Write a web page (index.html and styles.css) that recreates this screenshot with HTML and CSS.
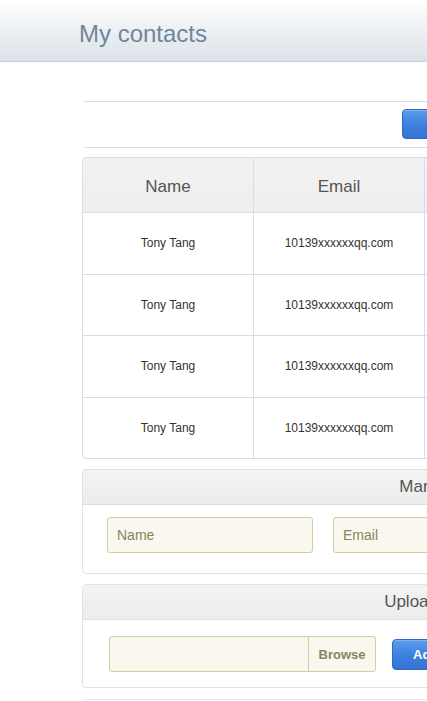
FILE: index.html
```html
<!DOCTYPE html>
<html lang="en">
<head>
<meta charset="utf-8">
<title>My contacts</title>
<link rel="stylesheet" href="styles.css">
</head>
<body>
<header class="topbar">
  <h1 class="title">My contacts</h1>
</header>
<main class="page">
  <div class="toolbar">
    <button class="btn btn-primary btn-new" type="button">Add new contact</button>
  </div>

  <table class="contacts">
    <thead>
      <tr>
        <th class="col-name">Name</th>
        <th class="col-email">Email</th>
        <th class="col-phone">Phone</th>
        <th class="col-actions">Actions</th>
      </tr>
    </thead>
    <tbody>
      <tr><td>Tony Tang</td><td>10139xxxxxxqq.com</td><td>138xxxxxxxx</td><td>Edit</td></tr>
      <tr><td>Tony Tang</td><td>10139xxxxxxqq.com</td><td>138xxxxxxxx</td><td>Edit</td></tr>
      <tr><td>Tony Tang</td><td>10139xxxxxxqq.com</td><td>138xxxxxxxx</td><td>Edit</td></tr>
      <tr><td>Tony Tang</td><td>10139xxxxxxqq.com</td><td>138xxxxxxxx</td><td>Edit</td></tr>
    </tbody>
  </table>

  <section class="panel">
    <div class="panel-head">Manage contacts</div>
    <div class="panel-body form-row">
      <input class="field" type="text" placeholder="Name">
      <input class="field" type="text" placeholder="Email">
      <input class="field" type="text" placeholder="Phone">
    </div>
  </section>

  <section class="panel">
    <div class="panel-head">Upload your contacts</div>
    <div class="panel-body upload-row">
      <label class="file">
        <span class="file-name"></span>
        <span class="file-browse">Browse</span>
      </label>
      <button class="btn btn-primary btn-add" type="button">Add</button>
    </div>
  </section>

  <hr class="rule">
</main>
</body>
</html>
```

FILE: styles.css
```css
html, body {
  margin: 0;
  padding: 0;
}

body {
  overflow: hidden;
  background: #ffffff;
  font-family: "Liberation Sans", Arial, sans-serif;
  color: #333333;
}

.topbar {
  height: 61px;
  padding-left: 79px;
  background: linear-gradient(to bottom, #ffffff 0%, #eff2f5 45%, #dbe2e8 100%);
  border-bottom: 1px solid #c6d0d8;
}

.title {
  margin: 0;
  padding-top: 20px;
  font-size: 24px;
  line-height: 27px;
  font-weight: normal;
  color: #6f869a;
}

.page {
  width: 764px;
  margin: 39px 0 0 82px;
}

.toolbar {
  margin-left: 2px;
  display: flex;
  padding: 7px 0 8px 318px;
  border-top: 1px solid #d8e0e7;
  border-bottom: 1px solid #d8e0e7;
}

.btn {
  font-family: "Liberation Sans", Arial, sans-serif;
  font-weight: bold;
  font-size: 13px;
  cursor: pointer;
}

.btn-primary {
  color: #ffffff;
  border: 1px solid #2c69c4;
  border-radius: 4px;
  background: linear-gradient(to bottom, #5b9cec 0%, #3c7fdc 55%, #3374d4 100%);
  box-shadow: inset 0 1px 0 rgba(255, 255, 255, 0.25);
}

.btn-new {
  height: 30px;
  padding: 0 14px 0 34px;
}

.contacts {
  width: 764px;
  margin-top: 9px;
  table-layout: fixed;
  border-collapse: separate;
  border-spacing: 0;
  border: 1px solid #d3dfea;
  border-radius: 4px;
  overflow: hidden;
}

.col-name { width: 170px; }
.col-email { width: 170px; }
.col-phone { width: 170px; }

.contacts th,
.contacts td {
  padding: 0;
  text-align: center;
  vertical-align: middle;
}

.contacts th + th,
.contacts td + td {
  border-left: 1px solid #d3dfea;
}

.contacts th {
  height: 51px;
  padding-top: 3px;
  font-size: 17px;
  font-weight: normal;
  color: #555555;
  background: linear-gradient(to bottom, #f2f2f2, #eeeeee);
  border-bottom: 1px solid #d3dfea;
}

.contacts td {
  height: 60.5px;
  font-size: 12px;
  color: #333333;
}

.contacts tbody tr + tr td {
  border-top: 1px solid #d3dfea;
}

.panel {
  margin-top: 10px;
  border: 1px solid #dce3ea;
  border-radius: 4px;
}

.panel-head {
  height: 34px;
  line-height: 34px;
  text-align: center;
  font-size: 17px;
  color: #555555;
  background: linear-gradient(to bottom, #f3f3f3, #ececec);
  border-bottom: 1px solid #d6e0ea;
  border-radius: 4px 4px 0 0;
}

.form-row {
  display: flex;
  gap: 20px;
  padding: 12px 24px 20px;
}

.field {
  box-sizing: border-box;
  width: 206px;
  height: 36px;
  margin: 0;
  padding: 0 9px;
  border: 1px solid #d3cba5;
  border-radius: 3px;
  background: #faf7ef;
  font-family: "Liberation Sans", Arial, sans-serif;
  font-size: 14px;
  color: #6e6845;
}

.field::placeholder {
  color: #8b845c;
  opacity: 1;
}

.upload-row {
  display: flex;
  align-items: center;
  gap: 16px;
  padding: 16px 26px 15px;
}

.file {
  box-sizing: border-box;
  display: flex;
  width: 267px;
  height: 36px;
  border: 1px solid #d3cba5;
  border-radius: 3px;
  background: #faf7ef;
}

.file-name {
  flex: 1;
}

.file-browse {
  width: 66px;
  border-left: 1px solid #d3cba5;
  display: flex;
  align-items: center;
  justify-content: center;
  font-size: 13px;
  font-weight: bold;
  color: #8b845c;
}

.btn-add {
  height: 31px;
  padding: 0 20px;
}

.rule {
  margin: 11px 0 0 2px;
  border: 0;
  border-top: 1px solid #e4e9ee;
}
```
